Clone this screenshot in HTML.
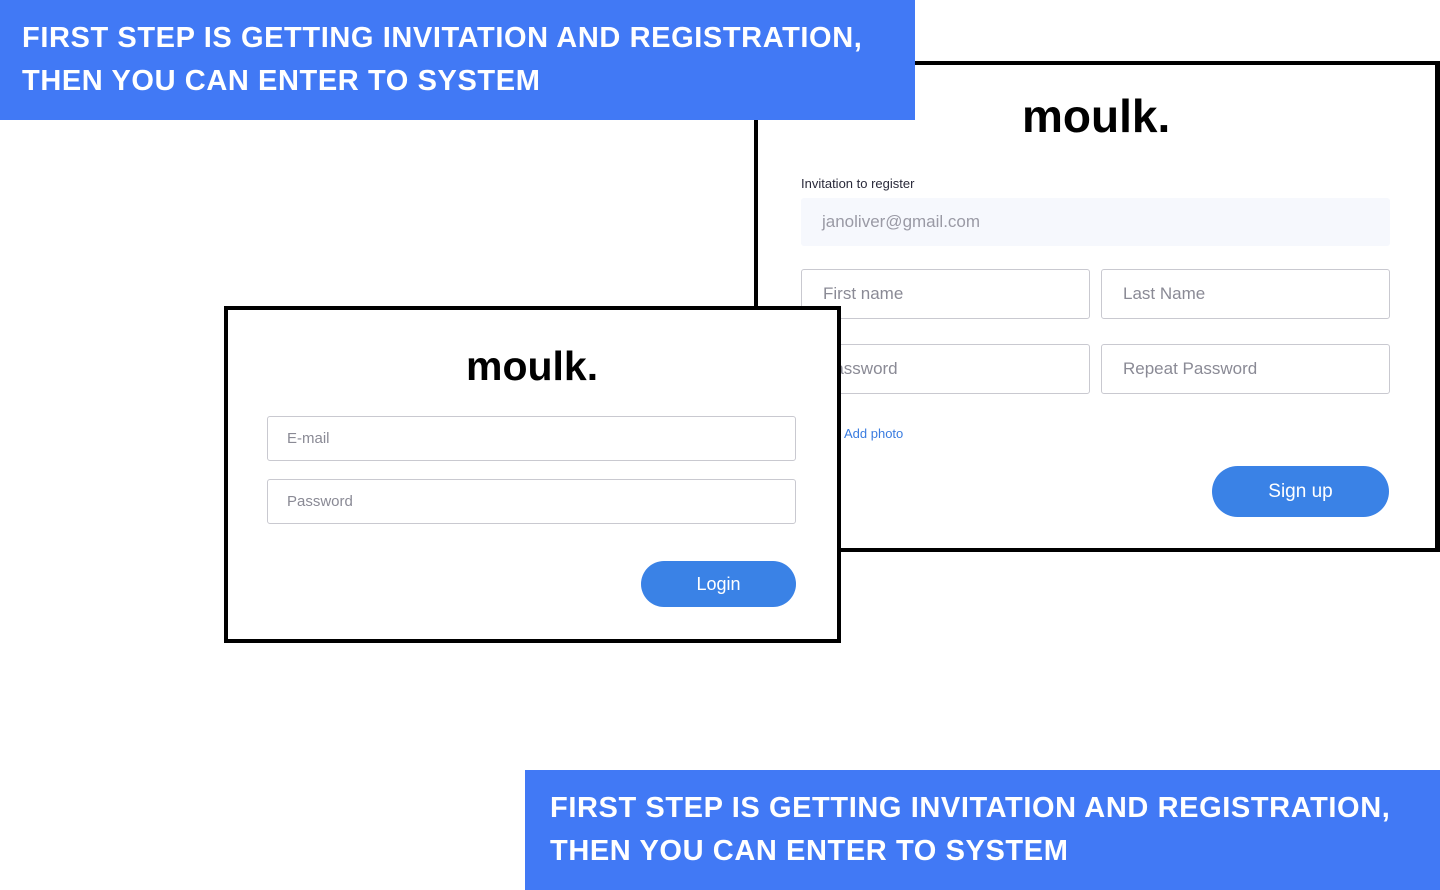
<!DOCTYPE html>
<html><head><meta charset="utf-8"><style>
*{box-sizing:border-box;margin:0;padding:0}
body{width:1440px;height:890px;position:relative;background:#fff;font-family:"Liberation Sans",sans-serif;overflow:hidden}
.ban{position:absolute;background:#4179f5;color:#fff;font-weight:bold;font-size:29px;line-height:43px;letter-spacing:0.6px}
.card{position:absolute;background:#fff;border:4px solid #000}
.logo{position:absolute;font-weight:bold;color:#000;letter-spacing:0px}
.in{position:absolute;border:1px solid #c9c9d0;border-radius:3px;color:#8a8a95;font-size:17px;padding-left:21px;display:flex;align-items:center;background:#fff}
.btn{position:absolute;background:#3a82e6;color:#fff;border-radius:26px;display:flex;align-items:center;justify-content:center;font-size:19px}
</style></head><body>
<div class="card" style="left:754px;top:61px;width:686px;height:491px;border-width:4px 5px 4px 4px">
 <div class="logo" style="left:264px;top:24px;font-size:46px">moulk.</div>
 <div style="position:absolute;left:43px;top:111px;font-size:13px;color:#2a2a3a">Invitation to register</div>
 <div class="in" style="left:43px;top:133px;width:589px;height:48px;border:none;background:#f6f8fd;color:#9a9aa5">janoliver@gmail.com</div>
 <div class="in" style="left:43px;top:204px;width:289px;height:50px">First name</div>
 <div class="in" style="left:343px;top:204px;width:289px;height:50px">Last Name</div>
 <div class="in" style="left:43px;top:279px;width:289px;height:50px">Password</div>
 <div class="in" style="left:343px;top:279px;width:289px;height:50px">Repeat Password</div>
 <div style="position:absolute;left:86px;top:361px;font-size:13px;color:#3a7ce0">Add photo</div>
 <div class="btn" style="left:454px;top:401px;width:177px;height:51px">Sign up</div>
</div>
<div class="card" style="left:224px;top:306px;width:617px;height:337px">
 <div class="logo" style="left:238px;top:33px;font-size:41px">moulk.</div>
 <div class="in" style="left:39px;top:106px;width:529px;height:45px;padding-left:19px;font-size:15px">E-mail</div>
 <div class="in" style="left:39px;top:169px;width:529px;height:45px;padding-left:19px;font-size:15px">Password</div>
 <div class="btn" style="left:413px;top:251px;width:155px;height:46px;font-size:18px">Login</div>
</div>
<div class="ban" style="left:0;top:0;width:915px;height:120px;padding:17px 0 0 22px">FIRST STEP IS GETTING INVITATION AND REGISTRATION,<br>THEN YOU CAN ENTER TO SYSTEM</div>
<div class="ban" style="left:525px;top:770px;width:915px;height:120px;padding:17px 0 0 25px">FIRST STEP IS GETTING INVITATION AND REGISTRATION,<br>THEN YOU CAN ENTER TO SYSTEM</div>
</body></html>
